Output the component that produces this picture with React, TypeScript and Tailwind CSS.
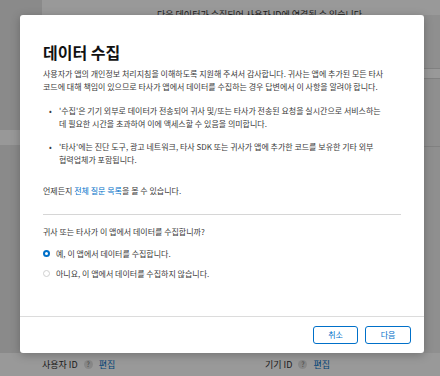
const font = { fontFamily: '"Noto Sans CJK KR", "Noto Sans", sans-serif' };

function HelpDot() {
  return (
    <span className="inline-flex h-[9px] w-[9px] items-center justify-center rounded-full bg-[#e2e2e2] text-[7px] leading-none text-[#777]">
      ?
    </span>
  );
}

function Radio({ checked, label }: { checked?: boolean; label: string }) {
  return (
    <label className="flex h-[14px] items-center gap-[6px]">
      {checked ? (
        <span className="flex h-[7px] w-[7px] items-center justify-center rounded-full bg-[#0070c9]">
          <span className="h-[3px] w-[3px] rounded-full bg-white" />
        </span>
      ) : (
        <span className="h-[7px] w-[7px] rounded-full border border-[#d0d0d0] bg-white" />
      )}
      <span>{label}</span>
    </label>
  );
}

export default function App() {
  return (
    <div className="relative h-[376px] w-[440px] overflow-hidden bg-white text-[#333]" style={font}>
      {/* page under the dialog */}
      <div className="flex h-[353px]">
        <aside className="flex w-[42px] flex-col bg-[#e6e6e6]">
          <div className="h-[130px]" />
          <div className="h-[15px] bg-[#fdfdfd]" />
        </aside>
        <main className="flex flex-1 flex-col">
          <p className="pl-[115px] pt-[9px] text-[9px] leading-[12px] text-[#333]">
            다음 데이터가 수집되어 사용자 ID에 연결될 수 있습니다.
          </p>
        </main>
        <div className="flex w-[16px] flex-col">
          <div className="h-[15px] bg-white" />
          <div className="h-[53px] bg-[#eeeeee]" />
          <div className="h-[11px] border-y border-[#d8d8d8] bg-white" />
          <div className="h-[68px] border-b border-[#d8d8d8] bg-[#eeeeee]" />
          <div className="flex-1 bg-[#eeeeee]" />
        </div>
      </div>
      <div className="flex h-[23px] items-center text-[9px] text-[#333]">
        <div className="flex w-[265px] items-center gap-[6px] pl-[42px]">
          <span>사용자 ID</span>
          <HelpDot />
          <span className="text-[#0070c9]">편집</span>
        </div>
        <div className="flex items-center gap-[6px]">
          <span>기기 ID</span>
          <HelpDot />
          <span className="text-[#0070c9]">편집</span>
        </div>
      </div>

      {/* dim overlay */}
      <div className="absolute inset-0 bg-black/40" />

      {/* dialog */}
      <div className="absolute left-[20px] top-[15px] flex h-[338px] w-[404px] flex-col rounded-[3px] bg-white shadow-[0_2px_10px_rgba(0,0,0,0.25)]">
        <div className="flex-1 px-[23px] pt-[27px] text-[8px] leading-[13px] text-[#3a3a3a]">
          <h1 className="text-[16px] font-semibold leading-[20px] text-[#111]">데이터 수집</h1>
          <p className="mt-[5px]">
            사용자가 앱의 개인정보 처리지침을 이해하도록 지원해 주셔서 감사합니다. 귀사는 앱에 추가된 모든 타사
            <br />
            코드에 대해 책임이 있으므로 타사가 앱에서 데이터를 수집하는 경우 답변에서 이 사항을 알려야 합니다.
          </p>
          <ul className="mt-[11px] flex flex-col gap-[10px]">
            <li className="flex">
              <span className="w-[16px] shrink-0 pl-[6px]">•</span>
              <span>
                '수집'은 기기 외부로 데이터가 전송되어 귀사 및/또는 타사가 전송된 요청을 실시간으로 서비스하는
                <br />
                데 필요한 시간을 초과하여 이에 액세스할 수 있음을 의미합니다.
              </span>
            </li>
            <li className="flex">
              <span className="w-[16px] shrink-0 pl-[6px]">•</span>
              <span>
                '타사'에는 진단 도구, 광고 네트워크, 타사 SDK 또는 귀사가 앱에 추가한 코드를 보유한 기타 외부
                <br />
                협력업체가 포함됩니다.
              </span>
            </li>
          </ul>
          <p className="mt-[18px]">
            언제든지 <span className="text-[#0070c9]">전체 질문 목록</span>을 볼 수 있습니다.
          </p>
          <div className="mt-[17px] border-t border-[#d6d6d6]" />
          <p className="mt-[10px]">귀사 또는 타사가 이 앱에서 데이터를 수집합니까?</p>
          <div className="mt-[8px] flex flex-col gap-[6px]">
            <Radio checked label="예, 이 앱에서 데이터를 수집합니다." />
            <Radio label="아니요, 이 앱에서 데이터를 수집하지 않습니다." />
          </div>
        </div>
        <div className="flex justify-end gap-[7px] border-t border-[#dcdcdc] pb-[9px] pr-[13px] pt-[9px]">
          <button className="h-[18px] w-[45px] rounded-[3px] border border-[#0070c9] text-[8px] text-[#0070c9]">
            취소
          </button>
          <button className="h-[18px] w-[46px] rounded-[3px] border border-[#0070c9] text-[8px] text-[#0070c9]">
            다음
          </button>
        </div>
      </div>
    </div>
  );
}
